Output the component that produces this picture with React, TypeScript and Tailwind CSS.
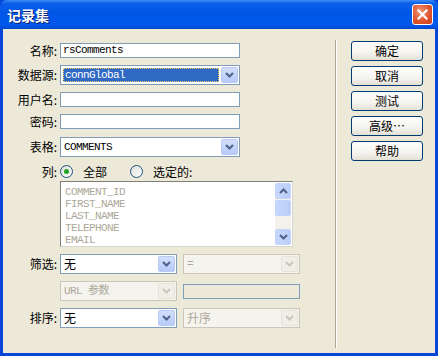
import React from 'react'

const cjk = 'font-["Noto_Sans_CJK_SC","Noto_Sans",sans-serif]'
const mono = 'font-["Liberation_Mono","Noto_Sans_CJK_SC",monospace]'

const Chevron: React.FC<{ up?: boolean; color?: string }> = ({ up, color = '#4d6185' }) => (
  <svg width="9" height="6" viewBox="0 0 9 6">
    <polyline
      points={up ? '1,5 4.5,1.5 8,5' : '1,1 4.5,4.5 8,1'}
      fill="none"
      stroke={color}
      strokeWidth="2"
    />
  </svg>
)

const DropButton: React.FC<{ disabled?: boolean }> = ({ disabled }) => (
  <div
    className={
      disabled
        ? 'w-[17px] h-full flex items-center justify-center rounded-[2px] border border-[#e6e4da] bg-[#f0efe7]'
        : 'w-[17px] h-full flex items-center justify-center rounded-[2px] border border-[#b9c9f0] bg-[linear-gradient(to_bottom,#d2defc,#b6cbf9)]'
    }
  >
    <Chevron color={disabled ? '#c9c7ba' : '#4d6185'} />
  </div>
)

const Select: React.FC<{
  width: string
  value: string
  disabled?: boolean
  focused?: boolean
  font?: string
}> = ({ width, value, disabled, focused, font = mono }) => (
  <div
    className={`${width} h-[20px] flex items-stretch p-[1px] border ${
      disabled ? 'border-[#c9c7ba] bg-[#f4f3ee]' : 'border-[#7f9db9] bg-white'
    }`}
  >
    <div className="flex-1 flex items-center pl-[1px] pr-[2px] py-[1px]">
      {focused ? (
        <div className="w-full h-full bg-[#316ac5] border border-dotted border-[#f0d060] flex items-center pl-[1px]">
          <span className={`${font} text-[11px] tracking-[-0.6px] text-white leading-none`}>{value}</span>
        </div>
      ) : (
        <span
          className={`${font} pl-[1px] leading-none ${
            disabled ? 'text-[#aca899]' : 'text-black'
          } ${font === mono ? 'text-[11px] tracking-[-0.6px]' : 'text-[12px]'}`}
        >
          {value}
        </span>
      )}
    </div>
    <DropButton disabled={disabled} />
  </div>
)

const TextInput: React.FC<{ width: string; value?: string; disabled?: boolean }> = ({ width, value, disabled }) => (
  <div
    className={`${width} h-[15px] border border-[#7f9db9] flex items-center pl-[2px] ${
      disabled ? 'bg-[#ece9d8]' : 'bg-white'
    }`}
  >
    <span className={`${mono} text-[11px] tracking-[-0.6px] leading-none text-black`}>{value}</span>
  </div>
)

const Label: React.FC<{ children: React.ReactNode }> = ({ children }) => (
  <div className={`${cjk} w-[57px] pr-[3px] text-right text-[12px] leading-none text-black shrink-0`}>
    {children}
  </div>
)

const Radio: React.FC<{ checked?: boolean }> = ({ checked }) => (
  <div className="w-[13px] h-[13px] rounded-full border border-[#1c5180] bg-[linear-gradient(135deg,#dcdcd6,#ffffff)] flex items-center justify-center">
    {checked && <div className="w-[5px] h-[5px] rounded-full bg-[#21a121]" />}
  </div>
)

const XpButton: React.FC<{ children: React.ReactNode }> = ({ children }) => (
  <div
    className={`${cjk} w-[72px] h-[20px] rounded-[3px] border border-[#003c74] bg-[linear-gradient(to_bottom,#ffffff,#f4f3ee_60%,#e3e0d5)] flex items-center justify-center text-[12px] leading-none text-black`}
  >
    {children}
  </div>
)

const ScrollBtn: React.FC<{ up?: boolean }> = ({ up }) => (
  <div className="h-[16px] rounded-[2px] border border-[#c3d3fd] bg-[linear-gradient(to_right,#c8d8fc,#b9cdf9)] flex items-center justify-center">
    <Chevron up={up} />
  </div>
)

const columns = ['COMMENT_ID', 'FIRST_NAME', 'LAST_NAME', 'TELEPHONE', 'EMAIL']

export default function App() {
  return (
    <div className="w-[438px] h-[356px] flex flex-col bg-[#0846d8]">
      {/* Title bar */}
      <div className="h-[29px] shrink-0 rounded-t-[7px] bg-[linear-gradient(to_bottom,#3d8cf6_0%,#0b5fe9_12%,#0056e6_45%,#0058ec_85%,#0049cf_100%)] flex items-center justify-between pl-[7px] pr-[5px]">
        <span
          className={`${cjk} text-[14px] font-bold text-white leading-none [text-shadow:1px_1px_0_#0a1f6e]`}
        >
          记录集
        </span>
        <div className="w-[21px] h-[21px] rounded-[3px] border border-white bg-[radial-gradient(circle_at_40%_35%,#f09a7a,#e0552e_55%,#c8401f)] flex items-center justify-center">
          <svg width="11" height="11" viewBox="0 0 11 11">
            <path d="M1.5 1.5 L9.5 9.5 M9.5 1.5 L1.5 9.5" stroke="white" strokeWidth="2.2" strokeLinecap="square" />
          </svg>
        </div>
      </div>

      {/* Client area */}
      <div className="flex-1 mx-[3px] mb-[3px] bg-[#ece9d8] flex">
        {/* Form */}
        <div className="w-[332px] flex flex-col pt-[14px]">
          <div className="flex items-center h-[15px]">
            <Label>名称:</Label>
            <TextInput width="w-[180px]" value="rsComments" />
          </div>
          <div className="flex items-center h-[20px] mt-[7px]">
            <Label>数据源:</Label>
            <Select width="w-[180px]" value="connGlobal" focused />
          </div>
          <div className="flex items-center h-[15px] mt-[7px]">
            <Label>用户名:</Label>
            <TextInput width="w-[180px]" />
          </div>
          <div className="flex items-center h-[15px] mt-[7px]">
            <Label>密码:</Label>
            <TextInput width="w-[180px]" />
          </div>
          <div className="flex items-center h-[20px] mt-[8px]">
            <Label>表格:</Label>
            <Select width="w-[180px]" value="COMMENTS" />
          </div>
          <div className="flex items-center h-[13px] mt-[8px]">
            <Label>列:</Label>
            <Radio checked />
            <span className={`${cjk} ml-[10px] text-[12px] leading-none`}>全部</span>
            <div className="ml-[23px]">
              <Radio />
            </div>
            <span className={`${cjk} ml-[10px] text-[12px] leading-none`}>选定的:</span>
          </div>
          <div className="flex mt-[3px]">
            <div className="w-[57px] shrink-0" />
            <div className="w-[233px] h-[66px] border border-[#7f7f7f] border-b-[#d8d6cc] border-r-[#d8d6cc] bg-white flex p-[1px]">
              <div className="flex-1 flex flex-col pl-[3px] pt-[3px]">
                {columns.map((c) => (
                  <div key={c} className={`${mono} h-[12px] text-[11px] tracking-[-0.6px] leading-[12px] text-[#aca899]`}>
                    {c}
                  </div>
                ))}
              </div>
              <div className="w-[16px] flex flex-col bg-[#f3f1ea]">
                <ScrollBtn up />
                <div className="mt-[1px] h-[16px] rounded-[2px] border border-[#c3d3fd] bg-[linear-gradient(to_right,#c8d8fc,#b9cdf9)]" />
                <div className="flex-1" />
                <ScrollBtn />
              </div>
            </div>
          </div>
          <div className="flex items-center h-[20px] mt-[7px]">
            <Label>筛选:</Label>
            <Select width="w-[117px]" value="无" font={cjk} />
            <div className="ml-[6px]">
              <Select width="w-[117px]" value="=" disabled />
            </div>
          </div>
          <div className="flex items-center h-[20px] mt-[7px]">
            <Label />
            <Select width="w-[117px]" value="URL 参数" disabled />
            <div className="ml-[6px]">
              <TextInput width="w-[117px]" disabled />
            </div>
          </div>
          <div className="flex items-center h-[20px] mt-[7px]">
            <Label>排序:</Label>
            <Select width="w-[117px]" value="无" font={cjk} />
            <div className="ml-[6px]">
              <Select width="w-[117px]" value="升序" font={cjk} disabled />
            </div>
          </div>
        </div>

        {/* Separator */}
        <div className="mt-[11px] h-[308px] w-[2px] flex">
          <div className="w-[1px] bg-[#aca899]" />
          <div className="w-[1px] bg-white" />
        </div>

        {/* Buttons */}
        <div className="ml-[14px] pt-[12px] flex flex-col gap-[5px]">
          <XpButton>确定</XpButton>
          <XpButton>取消</XpButton>
          <XpButton>测试</XpButton>
          <XpButton>高级…</XpButton>
          <XpButton>帮助</XpButton>
        </div>
      </div>
    </div>
  )
}
